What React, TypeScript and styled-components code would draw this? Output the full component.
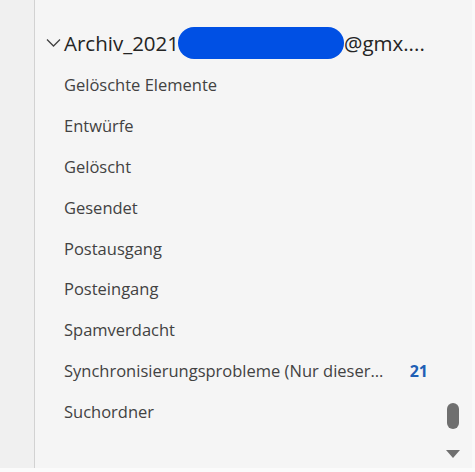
import React from "react";
import styled, { createGlobalStyle } from "styled-components";

const Global = createGlobalStyle`
  html, body { margin: 0; padding: 0; background: #fafafa; }
  body { font-family: "Open Sans", "Noto Sans", sans-serif; }
`;

const Frame = styled.div`
  width: 475px;
  height: 472px;
  display: flex;
  flex-direction: column;
  background: #fbfbfb;
  overflow: hidden;
`;

const Body = styled.div`
  display: flex;
  height: 468px;
`;

const Rail = styled.div`
  width: 34px;
  background: #f0f0f0;
  border-right: 1px solid #d2d2d2;
  flex: none;
`;

const Pane = styled.div`
  position: relative;
  width: 437px;
  background: #f5f5f5;
  padding-top: 22px;
  box-sizing: border-box;
`;

const Header = styled.div`
  display: flex;
  align-items: center;
  height: 42px;
  padding-left: 11px;
  color: #242424;
  font-size: 20.5px;
  white-space: nowrap;
`;

const Chevron = styled.svg`
  width: 15px;
  height: 10px;
  margin-right: 3px;
  flex: none;
`;

const Redact = styled.span`
  display: inline-block;
  width: 166px;
  height: 32px;
  border-radius: 16px;
  background: #0050e4;
  margin-left: -1px;
`;

const List = styled.div`
  display: flex;
  flex-direction: column;
`;

const Row = styled.div`
  display: flex;
  align-items: center;
  height: 40.9px;
  padding-left: 29px;
  padding-right: 44px;
  font-size: 16.5px;
  color: #424242;
`;

const Label = styled.span`
  flex: 1;
  min-width: 0;
  white-space: nowrap;
`;

const Count = styled.span`
  font-weight: 700;
  font-size: 16px;
  color: #1f5fb5;
`;

const Thumb = styled.div`
  position: absolute;
  left: 412px;
  top: 403px;
  width: 12px;
  height: 26px;
  border-radius: 6px;
  background: #6f6f6f;
`;

const Arrow = styled.div`
  position: absolute;
  left: 411px;
  top: 450px;
  width: 0;
  height: 0;
  border-left: 7px solid transparent;
  border-right: 7px solid transparent;
  border-top: 8px solid #6f6f6f;
`;

const Edge = styled.div`
  width: 3px;
  background: #f9f9f9;
`;

const items: { name: string; count?: number }[] = [
  { name: "Gelöschte Elemente" },
  { name: "Entwürfe" },
  { name: "Gelöscht" },
  { name: "Gesendet" },
  { name: "Postausgang" },
  { name: "Posteingang" },
  { name: "Spamverdacht" },
  { name: "Synchronisierungsprobleme (Nur dieser…", count: 21 },
  { name: "Suchordner" },
];

export default function App() {
  return (
    <Frame>
      <Global />
      <Body>
        <Rail />
        <Pane>
          <Header>
            <Chevron viewBox="0 0 15 10">
              <path d="M1 1.5 L7.5 8 L14 1.5" fill="none" stroke="#424242" strokeWidth="1.3" />
            </Chevron>
            <span>Archiv_2021</span>
            <Redact />
            <span>@gmx....</span>
          </Header>
          <List>
            {items.map((it) => (
              <Row key={it.name}>
                <Label>{it.name}</Label>
                {it.count !== undefined && <Count>{it.count}</Count>}
              </Row>
            ))}
          </List>
          <Thumb />
          <Arrow />
        </Pane>
        <Edge />
      </Body>
    </Frame>
  );
}
